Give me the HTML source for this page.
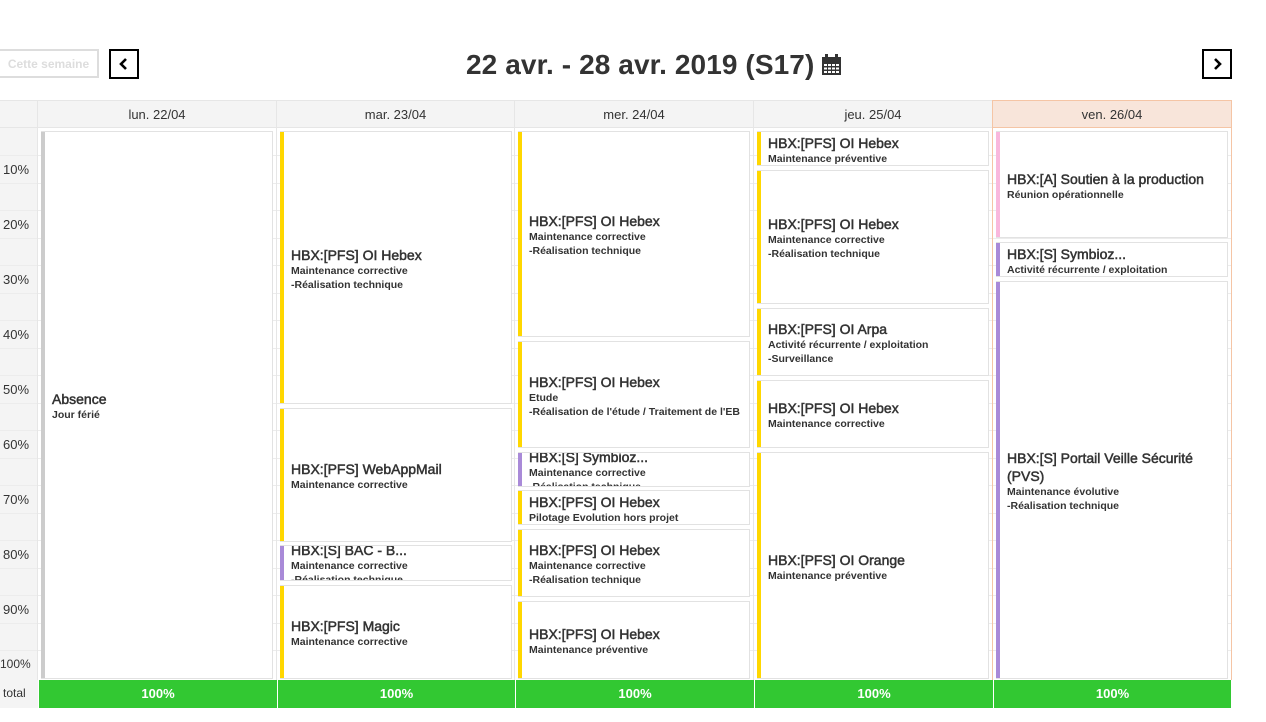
<!DOCTYPE html>
<html><head><meta charset="utf-8"><style>
*{box-sizing:border-box;margin:0;padding:0}
body{width:1266px;height:722px;background:#fff;font-family:"Liberation Sans",Arial,sans-serif;color:#333;position:relative;overflow:hidden}
.abs{position:absolute}
.btnw{left:-2px;top:49px;width:101px;height:29px;border:2px solid #ddd;color:#ddd;font-size:12px;font-weight:bold;text-align:center;line-height:27px}
.nav{width:30px;height:30px;border:2px solid #000;display:flex;align-items:center;justify-content:center}
.title{left:466px;top:48px;font-size:28px;font-weight:bold;color:#333;line-height:34px;letter-spacing:0.1px}
.hdr{top:100px;height:28px;background:#f4f4f4;border:1px solid #e6e6e6;font-size:13px;text-align:center;line-height:28px;color:#333}
.vl{top:128px;height:552px;width:1px;background:#e6e6e6}
.hl{left:0;width:1231px;height:1px;background:#ececec}
.lab{left:3px;font-size:13px;color:#333}
.ev{position:absolute;background:#fff;border:1px solid #e2e2e2;border-left:none;display:flex;flex-direction:column;justify-content:center;overflow:hidden;padding-left:11px;padding-top:2px}
.ev::before{content:"";position:absolute;left:0;top:0;bottom:0;width:4px;background:var(--c)}
.ev b{font-size:14px;font-weight:normal;-webkit-text-stroke:0.5px #333;color:#333;line-height:18px;white-space:nowrap}
.ev i{font-style:normal;font-size:10.5px;font-weight:bold;color:#333;line-height:14px;white-space:nowrap}
.tot{top:680px;height:28px;background:#32c832;color:#fff;font-weight:bold;font-size:13px;text-align:center;line-height:28px;border-left:1px solid #fff}
</style></head><body>
<div class="abs btnw">Cette semaine</div>
<div class="abs nav" style="left:109px;top:49px"><svg width="10" height="12" viewBox="0 0 10 12"><path d="M7 1 L2 6 L7 11" stroke="#000" stroke-width="2.6" fill="none"/></svg></div>
<div class="abs nav" style="left:1202px;top:49px"><svg width="10" height="12" viewBox="0 0 10 12"><path d="M3 1 L8 6 L3 11" stroke="#000" stroke-width="2.6" fill="none"/></svg></div>
<div class="abs title">22 avr. - 28 avr. 2019 (S17)</div>
<svg class="abs" style="left:822px;top:54px" width="19" height="22" viewBox="0 0 19 22"><rect x="3" y="0" width="3" height="5" fill="#333"/><rect x="13" y="0" width="3" height="5" fill="#333"/><rect x="0" y="3" width="19" height="5" fill="#333"/><rect x="0" y="8" width="19" height="13" fill="#333"/><g fill="#fff"><rect x="2" y="10" width="3" height="2"/><rect x="6" y="10" width="3" height="2"/><rect x="10" y="10" width="3" height="2"/><rect x="14" y="10" width="3" height="2"/><rect x="2" y="13.5" width="3" height="2"/><rect x="6" y="13.5" width="3" height="2"/><rect x="10" y="13.5" width="3" height="2"/><rect x="14" y="13.5" width="3" height="2"/><rect x="2" y="17" width="3" height="2"/><rect x="6" y="17" width="3" height="2"/><rect x="10" y="17" width="3" height="2"/><rect x="14" y="17" width="3" height="2"/></g></svg>

<div class="abs hdr" style="left:-1px;width:39px"></div>
<div class="abs hdr" style="left:37px;width:240px">lun. 22/04</div>
<div class="abs hdr" style="left:276px;width:239px">mar. 23/04</div>
<div class="abs hdr" style="left:514px;width:240px">mer. 24/04</div>
<div class="abs hdr" style="left:753px;width:240px">jeu. 25/04</div>
<div class="abs hdr" style="left:992px;width:240px;background:#f8e5da;border-color:#f5c5a5">ven. 26/04</div>
<div class="abs" style="left:0;top:128px;width:38px;height:552px;background:#f4f4f4"></div>

<div class="abs hl" style="top:155px"></div><div class="abs hl" style="top:183px"></div><div class="abs hl" style="top:210px"></div><div class="abs hl" style="top:238px"></div><div class="abs hl" style="top:265px"></div><div class="abs hl" style="top:293px"></div><div class="abs hl" style="top:320px"></div><div class="abs hl" style="top:348px"></div><div class="abs hl" style="top:375px"></div><div class="abs hl" style="top:403px"></div><div class="abs hl" style="top:430px"></div><div class="abs hl" style="top:458px"></div><div class="abs hl" style="top:485px"></div><div class="abs hl" style="top:513px"></div><div class="abs hl" style="top:540px"></div><div class="abs hl" style="top:568px"></div><div class="abs hl" style="top:595px"></div><div class="abs hl" style="top:623px"></div><div class="abs hl" style="top:650px"></div>
<div class="abs vl" style="left:37px"></div><div class="abs vl" style="left:276px"></div><div class="abs vl" style="left:514px"></div><div class="abs vl" style="left:753px"></div><div class="abs vl" style="left:992px;background:#f5c5a5"></div><div class="abs vl" style="left:1231px;background:#f5c5a5"></div>

<div class="abs lab" style="top:162px">10%</div><div class="abs lab" style="top:217px">20%</div><div class="abs lab" style="top:272px">30%</div><div class="abs lab" style="top:327px">40%</div><div class="abs lab" style="top:382px">50%</div><div class="abs lab" style="top:437px">60%</div><div class="abs lab" style="top:492px">70%</div><div class="abs lab" style="top:547px">80%</div><div class="abs lab" style="top:602px">90%</div><div class="abs lab" style="top:657px;left:0;font-size:12px">100%</div>

<div class="ev" style="--c:#ccc;left:41px;top:131px;width:232px;height:548px"><b>Absence</b><i>Jour férié</i></div>

<div class="ev" style="--c:#ffd700;left:280px;top:131px;width:232px;height:273px"><b>HBX:[PFS] OI Hebex</b><i>Maintenance corrective</i><i>-Réalisation technique</i></div>
<div class="ev" style="--c:#ffd700;left:280px;top:408px;width:232px;height:134px"><b>HBX:[PFS] WebAppMail</b><i>Maintenance corrective</i></div>
<div class="ev" style="--c:#a98ad8;left:280px;top:545px;width:232px;height:36px"><b>HBX:[S] BAC - B...</b><i>Maintenance corrective</i><i>-Réalisation technique</i></div>
<div class="ev" style="--c:#ffd700;left:280px;top:585px;width:232px;height:94px"><b>HBX:[PFS] Magic</b><i>Maintenance corrective</i></div>

<div class="ev" style="--c:#ffd700;left:518px;top:131px;width:232px;height:206px"><b>HBX:[PFS] OI Hebex</b><i>Maintenance corrective</i><i>-Réalisation technique</i></div>
<div class="ev" style="--c:#ffd700;left:518px;top:341px;width:232px;height:107px"><b>HBX:[PFS] OI Hebex</b><i>Etude</i><i>-Réalisation de l'étude / Traitement de l'EB</i></div>
<div class="ev" style="--c:#a98ad8;left:518px;top:452px;width:232px;height:35px"><b>HBX:[S] Symbioz...</b><i>Maintenance corrective</i><i>-Réalisation technique</i></div>
<div class="ev" style="--c:#ffd700;left:518px;top:490px;width:232px;height:35px"><b>HBX:[PFS] OI Hebex</b><i>Pilotage Evolution hors projet</i></div>
<div class="ev" style="--c:#ffd700;left:518px;top:529px;width:232px;height:68px"><b>HBX:[PFS] OI Hebex</b><i>Maintenance corrective</i><i>-Réalisation technique</i></div>
<div class="ev" style="--c:#ffd700;left:518px;top:601px;width:232px;height:78px"><b>HBX:[PFS] OI Hebex</b><i>Maintenance préventive</i></div>

<div class="ev" style="--c:#ffd700;left:757px;top:131px;width:232px;height:35px"><b>HBX:[PFS] OI Hebex</b><i>Maintenance préventive</i></div>
<div class="ev" style="--c:#ffd700;left:757px;top:170px;width:232px;height:134px"><b>HBX:[PFS] OI Hebex</b><i>Maintenance corrective</i><i>-Réalisation technique</i></div>
<div class="ev" style="--c:#ffd700;left:757px;top:308px;width:232px;height:68px"><b>HBX:[PFS] OI Arpa</b><i>Activité récurrente / exploitation</i><i>-Surveillance</i></div>
<div class="ev" style="--c:#ffd700;left:757px;top:380px;width:232px;height:68px"><b>HBX:[PFS] OI Hebex</b><i>Maintenance corrective</i></div>
<div class="ev" style="--c:#ffd700;left:757px;top:452px;width:232px;height:227px"><b>HBX:[PFS] OI Orange</b><i>Maintenance préventive</i></div>

<div class="ev" style="--c:#f9b8dd;left:996px;top:131px;width:232px;height:107px"><b>HBX:[A] Soutien à la production</b><i>Réunion opérationnelle</i></div>
<div class="ev" style="--c:#a98ad8;left:996px;top:242px;width:232px;height:35px"><b>HBX:[S] Symbioz...</b><i>Activité récurrente / exploitation</i></div>
<div class="ev" style="--c:#a98ad8;left:996px;top:281px;width:232px;height:398px"><b>HBX:[S] Portail Veille Sécurité</b><b>(PVS)</b><i>Maintenance évolutive</i><i>-Réalisation technique</i></div>

<div class="abs" style="left:0;top:680px;width:38px;height:28px;background:#f4f4f4;font-size:12px;line-height:26px;padding-left:3px">total</div>
<div class="abs tot" style="left:38px;width:239px">100%</div>
<div class="abs tot" style="left:277px;width:238px">100%</div>
<div class="abs tot" style="left:515px;width:239px">100%</div>
<div class="abs tot" style="left:754px;width:239px">100%</div>
<div class="abs tot" style="left:993px;width:238px">100%</div>
</body></html>
